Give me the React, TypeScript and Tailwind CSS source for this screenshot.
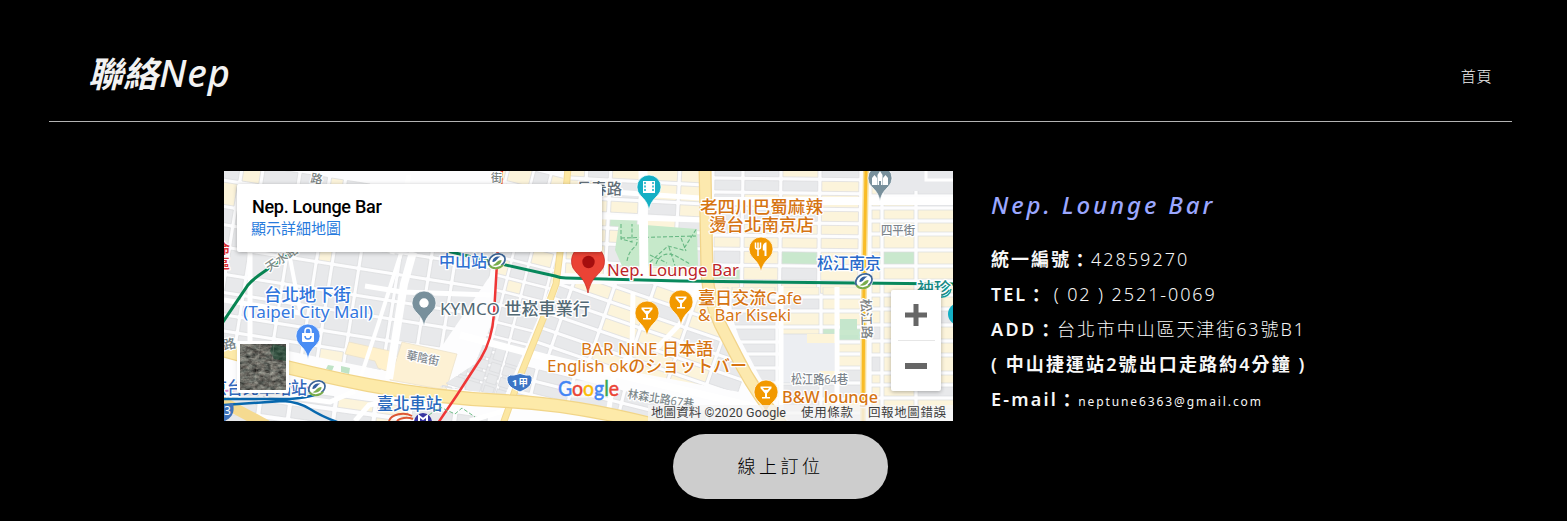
import React from "react";

const latin = "font-['Noto_Sans','Noto_Sans_CJK_TC',sans-serif]";

type Fill = "c" | "g" | "n" | "w";
const fills: Record<Fill, string> = { c: "#fcf4db", g: "#e8e9eb", n: "#c9e8cd", w: "#ffffff" };

/* City blocks laid out on a grid; one pattern string per row, one letter per block. */
function Blocks({ x, y, cols, rows, gap = 3, rotate = 0, clip }: {
  x: number; y: number; cols: number[]; rows: [number, string][]; gap?: number; rotate?: number; clip?: string;
}) {
  const out: React.ReactNode[] = [];
  let cy = y;
  rows.forEach(([h, pattern], r) => {
    let cx = x;
    cols.forEach((w, c) => {
      const kind = (pattern[c % pattern.length] || "g") as Fill;
      if (kind !== "w") {
        out.push(<rect key={`${r}-${c}`} x={cx} y={cy} width={w} height={h} fill={fills[kind]} stroke="#dbdcde" strokeWidth={0.7} />);
      }
      cx += w + gap;
    });
    cy += h + gap;
  });
  return (
    <g clipPath={clip ? `url(#${clip})` : undefined}>
      <g transform={`rotate(${rotate} ${x} ${y})`}>{out}</g>
    </g>
  );
}

function Label({ x, y, w, size, color, children, rotate, halo = 2.5, weight = 450 }: {
  x: number; y: number; w: number; size: number; color: string; children: string; rotate?: number; halo?: number; weight?: number;
}) {
  return (
    <text x={x} y={y} textLength={w} lengthAdjust="spacingAndGlyphs" fontSize={size} fill={color} stroke="#fff" strokeWidth={halo}
      paintOrder="stroke" strokeLinejoin="round" fontWeight={weight} transform={rotate ? `rotate(${rotate} ${x} ${y})` : undefined}>
      {children}
    </text>
  );
}

function Pin({ x, y, color, children }: { x: number; y: number; color: string; children?: React.ReactNode }) {
  return (
    <g transform={`translate(${x} ${y})`}>
      <path d="M0 23C-1.6 15.5-4.5 12.6-8.4 8.6A12 12 0 1 1 8.4 8.6C4.500 12.6 1.600 15.500 0 23Z" fill={color} stroke="#fff" strokeWidth={0.7} />
      {children}
    </g>
  );
}

const Cocktail = () => (
  <path d="M-5.500-5.500H5.500V-3.800L1 1.500V5H4V6.500H-4V5H-1V1.500L-5.500-3.800ZM-3-4L-1.700-2.300H1.700L3-4Z" fill="#fff" fillRule="evenodd" />
);

function Station({ x, y }: { x: number; y: number }) {
  return (
    <g transform={`translate(${x} ${y}) rotate(-24)`}>
      <ellipse rx="9.500" ry="8" fill="#fff" />
      <path d="M-8.500 1.500A8.500 7 0 0 1 8.500-1A8.500 7 0 0 1 2 6" fill="none" stroke="#3e6697" strokeWidth="1.800" />
      <path d="M-8.500 1A8.500 7 0 0 0 4 6" fill="none" stroke="#79ac4c" strokeWidth="2" />
      <path d="M-4.500-1C-3-5 2-5 5-2.500C1-3-1 1-4.500-1Z" fill="#335f9f" />
      <path d="M4.500 1C3 5-3 5-6 2C-2 3 0-1 4.500 1Z" fill="#79ac4c" />
    </g>
  );
}

function CityMap() {
  return (
    <svg viewBox="224 171 729 250" className="block h-[250px] w-[729px] font-['Noto_Sans','Noto_Sans_CJK_TC',sans-serif]">
      <defs>
        <clipPath id="nw"><path d="M224 171H494L494 270 420 378 224 338Z" /></clipPath>
        <clipPath id="mid"><path d="M500 171H564L553 280 535 325 505 395 440 387 475 364 493 320Z" /></clipPath>
        <clipPath id="north"><path d="M571 171H700L702 276 560 273Z" /></clipPath>
        <clipPath id="south"><path d="M560 284L702 284 714 318 738 372 750 394 528 352 552 306Z" /></clipPath>
        <clipPath id="bottom"><path d="M526 359L750 399 765 421H620L510 399Z" /></clipPath>
        <clipPath id="sw"><path d="M224 365L370 394 500 409 560 421H224Z" /></clipPath>
        <clipPath id="east"><path d="M722 287H860V421H788L760 377 739 337Z" /></clipPath>
      </defs>
      <rect x="224" y="171" width="729" height="250" fill="#fdfdfe" />

      <Blocks clip="nw" x={218} y={160} rotate={9} gap={4} cols={[23, 17, 33, 26, 12, 23, 35, 27, 20, 34, 22]}
        rows={[[17, "gcggcgg"], [22, "cggggcg"], [14, "gggggcg"], [18, "ggggcgg"], [23, "ggggggg"], [14, "ggggggg"], [18, "ggggggg"], [12, "ggggcgg"], [12, "gggggcg"], [10, "gggcgcg"], [16, "ggggccc"], [20, "gggggcc"]]} />
      <path d="M349 342L390 351 390 372 378 368 375 361 345 354Z" fill="#fff1cc" stroke="#e9dfc8" strokeWidth=".7" />
      <path d="M402 342L457 354 446 390 390 380Z" fill="#fdf1d4" stroke="#e9dfc8" strokeWidth=".7" />
      <Blocks clip="mid" x={490} y={160} rotate={14} gap={3.500} cols={[18, 22, 14, 20, 16, 20]}
        rows={[[16, "ccg"], [14, "gcg"], [17, "ggc"], [15, "ccg"], [14, "cgg"], [15, "gcg"], [11, "ggc"], [10, "ggg"], [14, "ggg"], [11, "gg"], [12, "gg"], [10, "gg"], [10, "gg"], [12, "gg"], [12, "gg"]]} />
      <Blocks clip="mid" x={429} y={325} rotate={17} gap={3} cols={[18, 10, 16, 15, 10, 20]}
        rows={[[14, "g"], [9, "g"], [9, "g"], [10, "g"], [12, "g"], [11, "g"]]} />
      <Blocks clip="north" x={571} y={164} rotate={3} gap={4} cols={[14, 20, 27, 34, 24]}
        rows={[[12, "cgccc"], [15, "ccgcc"], [11, "cccgc"], [10, "ccncg"], [12, "cccgg"], [15, "ccgcg"], [12, "ccgcc"], [9, "ccccc"]]} />
      <path d="M619 223L697 229 698 267 622 266 615 250Z" fill="#c6e9ca" />
      <g fill="none" stroke="#68b884" strokeWidth="1.100" strokeDasharray="4 2">
        <path d="M621 224V239L632 242V224M621 238L696 236M627 261C630 245 638 250 637 239M650 262L668 246 683 250 697 228M656 264C659 254 668 252 676 256L690 264M669 247L675 266M681 238L686 251M650 255L667 263" />
      </g>
      <path d="M643 171L644 279" stroke="#fff" strokeWidth="9" />

      <Blocks x={715} y={169} rotate={0.700} gap={4} cols={[26, 34, 35, 37]}
        rows={[[7, "ggcg"], [10, "gggc"], [12, "gccc"], [10, "gggc"], [9, "gccc"], [10, "cccc"], [12, "gcnc"], [12, "ncgc"], [9, "cccc"]]} />
      <Blocks x={872} y={170} gap={4} cols={[8, 30, 36]}
        rows={[[8, "ccg"], [12, "cgg"], [8, "ccg"], [9, "ccc"], [9, "ccc"], [12, "ccc"], [12, "cnc"], [11, "ccc"], [10, "ccc"], [10, "ccc"], [12, "ccg"], [12, "gcc"], [10, "ccc"], [14, "gcc"], [8, "ccc"], [9, "ccg"], [9, "ccc"]]} />
      <path d="M888 171H953V191H888Z" fill="#e8e9ec" />
      <path d="M926 171V180H953" stroke="#fff" strokeWidth="3" fill="none" />

      <Blocks clip="south" x={552} y={250} rotate={19} gap={4} cols={[29, 36, 34, 39, 34, 30]}
        rows={[[12, "gcgcc"], [12, "gccgc"], [11, "ggccg"], [12, "ggccc"], [12, "gggcc"], [11, "ggccc"], [11, "gggcc"], [12, "gggcc"], [12, "gggcc"], [10, "ggggc"]]} />
      <Blocks clip="bottom" x={507} y={362} rotate={14} gap={4} cols={[29, 34, 48, 40, 39, 45]}
        rows={[[10, "g"], [10, "g"], [14, "gggg"], [10, "ncgg"], [12, "g"]]} />
      <Blocks clip="east" x={712} y={287} gap={4} cols={[16, 43, 40, 39]}
        rows={[[8, "cccc"], [10, "cggc"], [12, "cgcc"], [11, "ggcn"], [8, "ggcc"], [10, "gggc"], [11, "gggg"], [12, "gggg"], [10, "gggc"], [14, "gggg"]]} />
      <path d="M782 334H835V383H782Z" fill="#eceef2" stroke="#d9dadc" strokeWidth=".7" />
      <path d="M807 334H835V343H807ZM819 371H844V382H819Z" fill="#fdf4d8" />
      <path d="M840 319H857V330H840ZM838 335H858V339H838Z" fill="#c5e6cc" />
      <Blocks clip="sw" x={230} y={382} rotate={8} gap={5} cols={[30, 25, 40, 35, 30, 40, 30]}
        rows={[[10, "gggccgg"], [12, "ggggccg"], [12, "gggnngg"]]} />
      <path d="M355 421L369 405 395 400M470 421L520 406M224 388L330 402 355 391" stroke="#fff" strokeWidth="5" fill="none" />

      <g fill="none" stroke="#fff" strokeLinejoin="round">
        <path d="M318 171L289 253 300 310M402 250L378 325 359 382" strokeWidth="4" />
        <path d="M365 286L402 292 491 295M224 300L300 313M409 175L392 254M250 252V345" strokeWidth="5" />
        <path d="M413 252L404 284 389 379" strokeWidth="8" />
        <path d="M460 335L544 357 760 408" strokeWidth="7" />
        <path d="M633 292L632 350 614 376 607 421M698 286L680 324 655 350" strokeWidth="5" />
        <path d="M781 286V421M837 287V421" strokeWidth="5" />
        <path d="M714 201H953" strokeWidth="8" />
        <path d="M574 216L700 220M570 189L700 198" strokeWidth="5" />
      </g>
      <path d="M328 365L334 366 332 371 326 369ZM341 366L350 368 349 374 341 372ZM534 401L555 404 552 407 533 406Z" fill="#bfe3c6" />

      <g fill="none" strokeLinecap="round">
        <path d="M568 168L561 245 556 284 543 319 521 374 503 424" stroke="#f2d993" strokeWidth="7" />
        <path d="M568 168L561 245 556 284 543 319 521 374 503 424" stroke="#fce7a2" strokeWidth="5" />
        <path d="M705 168L707 275Q709 299 720 324L735 353Q753 390 781 424" stroke="#f1d48b" strokeWidth="13" />
        <path d="M705 168L707 275Q709 299 720 324L735 353Q753 390 781 424" stroke="#fce9ae" strokeWidth="10.500" />
        <path d="M222 350Q300 372 368 385T505 401T655 425" stroke="#f1d589" strokeWidth="14" />
        <path d="M222 350Q300 372 368 385T505 401T655 425" stroke="#fdeaa9" strokeWidth="11.500" />
        <path d="M223 402L266 425" stroke="#f5da90" strokeWidth="11" />
        <path d="M866 170L864 276 863 422" stroke="#f8df99" strokeWidth="6" />
        <path d="M866 170L864 276 863 422" stroke="#f9bc27" strokeWidth="3" />
        <path d="M224 391L282 387 318 388" stroke="#d68bd1" strokeWidth="2" />
        <path d="M224 399H290Q306 398 318 394M223 405L283 401Q299 402 310 409T337 422" stroke="#0868ae" strokeWidth="2.500" />
        <path d="M223 322L248 285Q253 279 265 271L294 251" stroke="#078451" strokeWidth="3" />
        <path d="M447 251L497 263 555 276Q560 278 566 278L680 281 953 284" stroke="#07885c" strokeWidth="3" />
        <path d="M502 168L497 263 494 314Q492 340 481 358L457 395 438 423" stroke="#ef3636" strokeWidth="2.500" />
      </g>

      <Label x={269} y={272} w={36} size={12} color="#7e8c87" rotate={-34}>天水路</Label>
      <Label x={310} y={182} w={12} size={12} color="#78817f" rotate={10}>路</Label>
      <Label x={491} y={182} w={11} size={11} color="#78817f">街</Label>
      <Label x={576} y={194} w={46} size={15} color="#647079">長春路</Label>
      <Label x={217} y={253} w={13} size={13} color="#d93035" weight={600}>命</Label>
      <Label x={217} y={268} w={13} size={13} color="#d93035" weight={600}>區</Label>
      <Label x={439} y={267} w={48} size={16} color="#2e70d2">中山站</Label>
      <Station x={497} y={261} />
      <Station x={864} y={281} />
      <Label x={264} y={301} w={87} size={17} color="#2f74dc">台北地下街</Label>
      <Label x={243} y={318} w={130} size={17} color="#3478de">(Taipei City Mall)</Label>
      <Label x={440} y={315} w={150} size={17} color="#526974">KYMCO 世崧車業行</Label>
      <Label x={607} y={276} w={132} size={17} color="#bd2528">Nep. Lounge Bar</Label>
      <Label x={700} y={213} w={123} size={17.500} color="#d67412">老四川巴蜀麻辣</Label>
      <Label x={709} y={231} w={105} size={17.500} color="#d67412">燙台北南京店</Label>
      <Label x={817} y={269} w={64} size={16} color="#2869ca">松江南京</Label>
      <Label x={881} y={235} w={34} size={12} color="#7d858c">四平街</Label>
      <Label x={698} y={304} w={104} size={17} color="#d67412">臺日交流Cafe</Label>
      <Label x={698} y={321} w={93} size={17} color="#d67412">&amp; Bar Kiseki</Label>
      <Label x={581} y={355} w={132} size={17} color="#d67412">BAR NiNE 日本語</Label>
      <Label x={547} y={372} w={200} size={17} color="#d67412">English okのショットバー</Label>
      <Label x={782} y={403} w={96} size={17} color="#d67412" weight={500}>B&amp;W lounge</Label>
      <Label x={791} y={384} w={57} size={12} color="#7d858c">松江路64巷</Label>
      <Label x={861} y={299} w={40} size={13} color="#7d8384" rotate={88}>松江路</Label>
      <Label x={406} y={359} w={33} size={11.500} color="#818990" rotate={11}>華陰街</Label>
      <Label x={627} y={398} w={67} size={12} color="#7d898c" rotate={9}>林森北路67巷</Label>
      <Label x={224} y={350} w={13} size={13} color="#747f85" rotate={-12}>路</Label>
      <Label x={211} y={394} w={96} size={16.500} color="#3268bd">京台北車站站</Label>
      <Station x={317} y={388} />
      <Label x={377} y={410} w={65} size={16.500} color="#2869bd">臺北車站</Label>
      <Label x={917} y={294} w={34} size={16} color="#168a85" weight={500}>袖珍</Label>

      <Pin x={649} y={187} color="#14afc4">
        <path d="M-6-6H6V6H-6Z" fill="#fff" /><path d="M-4-5V5M4-5V5" stroke="#14afc4" strokeWidth="1.500" strokeDasharray="2 1.500" />
      </Pin>
      <Pin x={761} y={249} color="#f29900">
        <path d="M-5.500-6.500V-2Q-5.500 0-3.500 0H-2.500Q-.500 0-.500-2V-6.500M-3-6.500V7" fill="none" stroke="#fff" strokeWidth="1.500" /><path d="M5.500 7H3.500V1.500H1.800V-2.500Q2-6 5.500-6.800Z" fill="#fff" />
      </Pin>
      <Pin x={681} y={302} color="#f29900"><Cocktail /></Pin>
      <Pin x={647} y={313} color="#f29900"><Cocktail /></Pin>
      <Pin x={766} y={392} color="#f29900"><Cocktail /></Pin>
      <Pin x={424} y={303} color="#78909c"><circle r="4.700" fill="#fff" /></Pin>
      <Pin x={308} y={336} color="#4a8df4">
        <path d="M-6-3H6V5Q6 6 5 6H-5Q-6 6-6 5Z" fill="#fff" /><path d="M-3-3V-5A3 3 0 0 1 3-5V-3" stroke="#fff" strokeWidth="1.500" fill="none" /><path d="M-3 0A3 3 0 0 0 3 0" stroke="#4a8df4" strokeWidth="1.400" fill="none" />
      </Pin>
      <Pin x={880} y={178} color="#78909c">
        <path d="M-8 7V0L-5.500-3-3 0V7ZM-2.500 7V-3L0-7 2.500-3V7ZM3 7V0L5.500-3 8 0V7Z" fill="#fff" /><path d="M-1 7V3H1V7Z" fill="#78909c" />
      </Pin>
      <path d="M588 293C585 278 579 277 573 268A16.500 16.500 0 1 1 603 268C597 277 591 278 588 293Z" fill="#ea4335" stroke="#c5221f" strokeWidth=".7" />
      <circle cx="588.500" cy="262" r="6.200" fill="#a50e0e" />
      <circle cx="959" cy="314" r="11" fill="#14afc4" />
      <path d="M941 297A9 9 0 0 0 951 289M944 290L949 286" stroke="#18a09d" strokeWidth="1.500" fill="none" />

      <path d="M507 377Q510 374 514 375Q520 372 526 375Q530 374 532 377C533 387 526 389 520 392C513 389 506 386 507 377Z" fill="#3c75c5" stroke="#fff" />
      <text x="512" y="386" textLength="16" fontSize="9.500" fontWeight="700" fill="#fff">1甲</text>
      <path d="M216 404Q220 407 233 403C235 413 232 417 225 421H216Z" fill="#3e73bc" />
      <text x="224" y="415" fontSize="12" fill="#fff">3</text>
      <path d="M389 421A14 9 0 0 1 412 416M397 421A10 5 0 0 1 413 419" fill="none" stroke="#dd5734" strokeWidth="2" />
      <circle cx="423" cy="422" r="9" fill="#3835a2" /><path d="M419 421V416L423 419 427 416V421" stroke="#fff" strokeWidth="2" fill="none" />
      <path d="M429 415L440 407 455 414 462 408 475 417" stroke="#70bd88" strokeDasharray="4 2" fill="none" />

      <path d="M568 389H612" stroke="#fff" strokeWidth="17" strokeLinecap="round" opacity=".7" />
      <text x="558" y="396" fontSize="21.500" fontFamily="Lato" textLength="61" lengthAdjust="spacingAndGlyphs" strokeWidth=".5">
        <tspan fill="#4285f4" stroke="#4285f4">G</tspan><tspan fill="#ea4335" stroke="#ea4335">o</tspan><tspan fill="#fbbc05" stroke="#fbbc05">o</tspan><tspan fill="#4285f4" stroke="#4285f4">g</tspan><tspan fill="#34a853" stroke="#34a853">l</tspan><tspan fill="#ea4335" stroke="#ea4335">e</tspan>
      </text>
      <rect x="648" y="405" width="305" height="16" fill="#f5f5f5" fillOpacity=".78" />
      <g fontFamily="Roboto, 'Noto Sans CJK TC'" fontSize="12.500" fill="#3d3d3d">
        <text x="651" y="417" textLength="135">地圖資料 ©2020 Google</text>
        <text x="801" y="417" textLength="52">使用條款</text>
        <text x="868" y="417" textLength="78">回報地圖錯誤</text>
      </g>
    </svg>
  );
}

function SatelliteToggle() {
  return (
    <button aria-label="衛星" className="absolute left-[13px] top-[170px] h-[52px] w-[52px] overflow-hidden rounded-[3px] border-[3px] border-white bg-[#65695f] shadow-md">
      <svg viewBox="0 0 46 46" className="h-full w-full">
        <defs>
          <filter id="terrain" x="0" y="0" width="100%" height="100%" colorInterpolationFilters="sRGB">
            <feTurbulence type="fractalNoise" baseFrequency=".16 .28" numOctaves="4" seed="8" />
            <feColorMatrix values=".5 .35 0 0 -.02 .45 .4 0 0 -.02 .42 .38 0 0 -.02 0 0 0 0 1" />
          </filter>
        </defs>
        <rect width="46" height="46" filter="url(#terrain)" />
        <path d="M33 0L46 3V17L34 15 30 7Z" fill="#16442f" opacity=".6" />
        <path d="M0 13L46 20M0 31L46 25M20 0L14 46M34 0L29 46" stroke="#bcb9af" strokeWidth=".7" opacity=".35" />
      </svg>
    </button>
  );
}

function MapPanel() {
  return (
    <section className="relative h-[250px] w-[729px] shrink-0 overflow-hidden bg-white">
      <CityMap />
      <div className="absolute left-[13px] top-[13px] h-[68px] w-[365px] rounded-[2px] bg-white pl-[15px] pt-[12px] shadow-[0_1px_4px_rgba(0,0,0,0.3)] font-['Roboto','Noto_Sans_CJK_TC',sans-serif]">
        <h2 className="text-[18px] font-medium leading-[22px] tracking-[-0.28px] text-black">Nep. Lounge Bar</h2>
        <a href="#map" className="-ml-px block text-[15px] leading-[23px] text-[#277bdd]">顯示詳細地圖</a>
      </div>
      <SatelliteToggle />
      <div className="absolute left-[667px] top-[119px] flex h-[101px] w-[50px] flex-col items-center rounded-[2px] bg-white shadow-[0_1px_4px_rgba(0,0,0,0.3)]">
        <button aria-label="放大" className="flex h-[50px] w-full items-center justify-center">
          <svg viewBox="0 0 22 22" className="h-[22px] w-[22px]"><path d="M8.500 0H13.500V8.500H22V13.500H13.500V22H8.500V13.500H0V8.500H8.500Z" fill="#666" /></svg>
        </button>
        <div className="h-px w-[37px] bg-[#e6e6e6]" />
        <button aria-label="縮小" className="flex h-[50px] w-full items-center justify-center">
          <svg viewBox="0 0 22 6" className="h-[6px] w-[22px]"><path d="M0 0H22V6H0Z" fill="#666" /></svg>
        </button>
      </div>
    </section>
  );
}

const Colon = () => <span className="inline-block translate-y-px">：</span>;

export default function App() {
  return (
    <div className={`h-[521px] overflow-hidden bg-black text-[#f7f7f7] ${latin}`}>
      <header className="ml-[49px] flex h-[122px] w-[1463px] items-start justify-between border-b border-[#b3b3b3] pl-[39px] pr-5">
        <h1 className="mt-[48px] whitespace-nowrap text-[35px] font-semibold italic leading-[48px] text-[#f2f2f2]">聯絡<span className="ml-px text-[38px] font-medium tracking-[0.9px]">Nep</span></h1>
        <a href="#home" className="mt-[66px] text-[15px] font-light leading-5 tracking-[0.6px] text-[#f2f2f2]">首頁</a>
      </header>
      <main>
        <div className="ml-[224px] mt-[49px] flex gap-[38px]">
          <MapPanel />
          <section className="whitespace-nowrap pt-[16px] text-[18px] leading-[35px] tracking-[2px]">
            <h2 className="text-[24px] font-medium italic tracking-[2.9px] text-[#9ba7ff]">Nep. Lounge Bar</h2>
            <div className="mt-[20px]">
              <p><b className="font-bold">統一編號<Colon /></b><span className="font-light">42859270</span></p>
              <p><b className="font-semibold">TEL<Colon /></b><span className="font-light tracking-[1.900px]"> ( 02 ) 2521-0069</span></p>
              <p><b className="font-semibold tracking-[2.400px]">ADD<Colon /></b><span className="font-light tracking-[1.900px]">台北市中山區天津街63號B1</span></p>
              <p className="font-semibold tracking-[2.100px]">( 中山捷運站2號出口走路約4分鐘 )</p>
              <p><b className="font-semibold tracking-[2.200px]">E-mail<Colon /></b><span className="text-[12px] font-normal tracking-[1.900px]">neptune6363@gmail.com</span></p>
            </div>
          </section>
        </div>
        <button className="ml-[673px] mt-[13px] flex h-[65px] w-[215px] items-center justify-center rounded-full bg-[#cdcdcd] text-[18px] font-light tracking-[3.500px] text-black">線上訂位</button>
      </main>
    </div>
  );
}
